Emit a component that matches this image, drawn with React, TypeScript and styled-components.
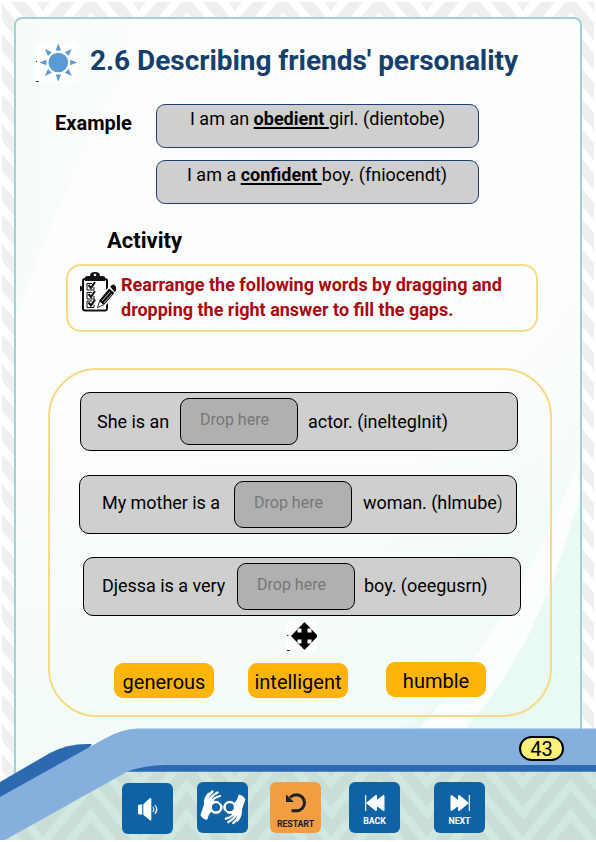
import React from "react";
import styled, { createGlobalStyle } from "styled-components";

const Global = createGlobalStyle`
  * { box-sizing: border-box; }
  html, body { margin: 0; padding: 0; background: #fff; }
  body { font-family: Roboto, "Liberation Sans", sans-serif; color: #000; overflow: hidden; }
`;

const Page = styled.main`
  position: relative;
  width: 596px;
  height: 842px;
  overflow: hidden;
  isolation: isolate;
`;

const Backdrop = styled.svg`
  position: absolute;
  inset: 0;
  z-index: -1;
`;

const SheetWrap = styled.div`
  padding-top: 16.5px;
  height: 728px;
`;

const Sheet = styled.section`
  width: 568px;
  height: 766px;
  margin-left: 14px;
  border: 2px solid #a3cfd6;
  border-radius: 8px;
  display: flex;
  flex-direction: column;
`;

const Header = styled.header`
  display: flex;
  height: 85.5px;
  padding: 24.5px 0 0 20px;
`;

const Title = styled.h1`
  margin: 1px 0 0 13px;
  font-size: 28px;
  line-height: 34px;
  letter-spacing: -0.04px;
  font-weight: 700;
  color: #143f6e;
  white-space: nowrap;
`;

const Examples = styled.section`
  display: grid;
  grid-template-columns: 101px 323px;
  row-gap: 12px;
  padding-left: 39px;
`;

const Label = styled.h2<{ $size?: number; $ml?: number; $top?: number }>`
  height: 24px;
  margin: ${(p) => p.$top ?? 0}px 0 0 ${(p) => p.$ml ?? 0}px;
  font-size: ${(p) => p.$size ?? 20}px;
  line-height: 24px;
  font-weight: 700;
`;

const ExampleBox = styled.div<{ $indent: number }>`
  grid-column: 2;
  height: 44px;
  padding: 2px 0 0 ${(p) => p.$indent}px;
  border: 1px solid #1d426e;
  border-radius: 9px;
  background: #cfcfcf;
  font-size: 18px;
  line-height: 24px;
  white-space: pre;
  b { text-decoration: underline; text-decoration-thickness: 2px; text-underline-offset: 2px; }
`;

const Instruction = styled.section`
  display: flex;
  width: 472px;
  height: 68px;
  margin: 11px 0 0 50px;
  padding: 6px 0 0 12px;
  border: 2px solid #f9da84;
  border-radius: 15px;
`;

const InstructionText = styled.p`
  margin: 0 0 0 5px;
  font-size: 18px;
  line-height: 25px;
  font-weight: 700;
  color: #a90710;
  white-space: nowrap;
`;

const Feedback = styled.p`
  height: 36px;
  margin: 0;
  padding: 5px 0 0 238px;
  font-size: 19px;
  font-weight: 500;
  line-height: 24px;
  color: #fff;
`;

const Exercise = styled.section`
  width: 504px;
  height: 349px;
  margin-left: 32px;
  border: 2px solid #f8da86;
  border-radius: 49px;
  padding-top: 22px;
`;

const Sentence = styled.div<{ $ml: number; $gap: number }>`
  display: flex;
  width: 438px;
  height: 59px;
  margin: 0 0 ${(p) => p.$gap}px ${(p) => p.$ml}px;
  border: 1px solid #000;
  border-radius: 10px;
  background: #cfcfcf;
  font-size: 18px;
  line-height: 24px;
  letter-spacing: -0.04px;
  white-space: pre;
`;

const Lead = styled.span<{ $width: number; $pad: number; $top: number }>`
  width: ${(p) => p.$width}px;
  padding: ${(p) => p.$top}px 0 0 ${(p) => p.$pad}px;
`;

const Drop = styled.span`
  width: 118px;
  height: 47px;
  margin-top: 5px;
  padding: 9px 0 0 19px;
  border: 1px solid #000;
  border-radius: 9px;
  background: #b0b0b0;
  color: #777;
  font-size: 16px;
  letter-spacing: 0;
`;

const Tail = styled.span<{ $pad: number; $top: number }>`
  padding: ${(p) => p.$top}px 0 0 ${(p) => p.$pad}px;
`;

const Thin = styled.span`
  font-weight: 300;
`;

const MoveIcon = styled.svg`
  display: block;
  margin: 0 0 11px 237px;
`;

const Words = styled.div`
  display: flex;
  padding-left: 64px;
`;

const Word = styled.button<{ $ml?: number; $up?: boolean }>`
  width: 100px;
  height: 35px;
  margin: ${(p) => (p.$up ? 0 : 1)}px 0 0 ${(p) => p.$ml ?? 0}px;
  padding: 3px 0 0;
  border: 0;
  border-radius: 9px;
  background: #feb409;
  font: 20px/24px Roboto, sans-serif;
  color: #000;
`;

const Footer = styled.footer`
  position: relative;
  height: 114px;
  isolation: isolate;
`;

const Wave = styled.svg`
  position: absolute;
  inset: 0;
  z-index: -1;
`;

const PageRow = styled.div`
  display: flex;
  justify-content: flex-end;
  height: 54px;
  padding: 8px 32px 0 0;
`;

const PageNumber = styled.span`
  width: 45px;
  height: 25px;
  border: 2px solid #000;
  border-radius: 13px;
  background: #fff27a;
  font-size: 20px;
  line-height: 22px;
  text-align: center;
`;

const Nav = styled.nav`
  display: flex;
  padding-left: 122px;
`;

const NavButton = styled.button<{ $ml?: number; $orange?: boolean; $down?: boolean }>`
  display: flex;
  flex-direction: column;
  align-items: center;
  justify-content: center;
  width: 51px;
  height: 51px;
  margin: ${(p) => (p.$down ? 1 : 0)}px 0 0 ${(p) => p.$ml ?? 0}px;
  padding: 0;
  border: 0;
  border-radius: 6px;
  background: ${(p) => (p.$orange ? "#f29d42" : "#0e63a6")};
  color: ${(p) => (p.$orange ? "#17222b" : "#fff")};
  svg { display: block; }
`;

const Caption = styled.span<{ $gap: number }>`
  margin: ${(p) => p.$gap}px 0 -5px;
  font: 700 8.8px/10px Roboto, sans-serif;
  letter-spacing: -0.1px;
`;

const PITCH = 30;

const Chevrons = ({ id, color, x, y }: { id: string; color: string; x: number; y: number }) => (
  <pattern id={id} width="96" height={PITCH} patternUnits="userSpaceOnUse" x={x} y={y}>
    {[-1, 0, 1, 2, 3, 4].map((n) => (
      <path
        key={n}
        d={`M-48 ${n * PITCH - 58}l48 58l48 -58l48 58l48 -58`}
        fill="none"
        stroke={color}
        strokeWidth="11"
      />
    ))}
  </pattern>
);

const PageBackdrop = () => (
  <Backdrop width="596" height="842" viewBox="0 0 596 842">
    <defs>
      <Chevrons id="grey" color="#efefef" x={43} y={2} />
      <linearGradient id="tint" x1="0.2" y1="0" x2="1" y2="1">
        <stop offset="0" stopColor="#fdfdfe" />
        <stop offset="0.6" stopColor="#fcfdfd" />
        <stop offset="1" stopColor="#e8faf3" />
      </linearGradient>
      <linearGradient id="left" x1="0" x2="1">
        <stop offset="0" stopColor="#f5fcfa" />
        <stop offset="1" stopColor="#fdfdfe" />
      </linearGradient>
      <linearGradient id="low" x1="0" y1="0" x2="0" y2="1">
        <stop offset="0" stopColor="#f1fbf7" stopOpacity="0" />
        <stop offset="1" stopColor="#f1fbf7" />
      </linearGradient>
    </defs>
    <rect x="2" y="2" width="592" height="838" fill="url(#grey)" />
    <rect x="15" y="17.500" width="566" height="763" rx="8" fill="url(#tint)" />
    <path d="M16 22H160Q72 150 16 320Z" fill="url(#left)" />
    <rect x="16" y="440" width="564" height="340" fill="url(#low)" />
    <path d="M581 500Q500 680 400 728H581Z" fill="#e5faf2" opacity=".6" />
    <path d="M575 470Q520 610 420 728H466Q545 640 581 485Z" fill="#fff" opacity=".75" />
  </Backdrop>
);

const Sun = () => (
  <svg width="41" height="40" viewBox="0 0 41 40">
    <rect width="41" height="40" fill="#fff" />
    <circle cx="22.3" cy="19.5" r="9.800" fill="#5b9bd5" />
    {[0, 45, 90, 135, 180, 225, 270, 315].map((a) => (
      <path key={a} d="M22.300 .5l2.700 7.100h-5.400z" fill="#5b9bd5" transform={`rotate(${a} 22.3 19.5)`} />
    ))}
    <path d="M0 38.500h2.500M0 18.500h1" stroke="#222" strokeWidth="1" />
  </svg>
);

const Clipboard = () => (
  <svg width="36" height="42" viewBox="0 0 36 42">
    <rect x="3" y="7" width="24" height="31.500" rx="2" fill="#fff" stroke="#111" strokeWidth="2" />
    <path d="M5 9V5.500Q5 4 8 4h2Q10 0 15 0t5 4h2q3 0 3 1.500V9z" fill="#111" />
    <circle cx="15" cy="3" r="1.300" fill="#fff" />
    <path d="M0 13.500l3 2v2l-3 2z" fill="#111" />
    {[11.5, 20.5, 29].map((y) => (
      <g key={y} fill="none" stroke="#111">
        <path d={`M12 ${y}H7v6.500h7v-3`} strokeWidth="1" />
        <path d={`M8.500 ${y + 1.5}l2.500 3 4-6`} strokeWidth="2" />
      </g>
    ))}
    <path d="M16.500 36.500l2.500-9L29 15.500l6.500 5.500-10.500 12z" fill="#111" stroke="#fff" strokeWidth="1.500" />
    <path d="M17.500 35.500l2.200-6.500 4 3.800z" fill="#fff" stroke="#111" strokeWidth=".8" />
    <path d="M22 29l8-9M24 31l8-9" stroke="#fff" strokeWidth=".7" />
    <path d="M30 14.500l2-1.500q1.500-1 3 .5t1 3v2.500l-1.500 1z" fill="#111" />
  </svg>
);

const MoveArrows = () => (
  <MoveIcon width="30" height="30" viewBox="0 0 30 30">
    <rect width="30" height="30" fill="#fff" />
    <path d="M17.500 1l13.500 14-13.500 14L4 15z" fill="#000" />
    <path d="M10.500 7.500h4v4h-4zM20.500 7.500h4v4h-4zM10.500 18.500h4v4h-4zM20.500 18.500h4v4h-4z" fill="#fff" />
    <path d="M0 29.500h3M0 14.500h1.500" stroke="#222" />
  </MoveIcon>
);

const Speaker = () => (
  <svg width="24" height="24" viewBox="0 0 24 24">
    <path d="M2 9q0-1.500 1.500-1.500H6.200v10H3.500Q2 17.500 2 16zM7.300 7.200L13.500 1.500q1.800-1.300 1.800.5v20.500q0 1.800-1.800.5L7.300 17.800z" fill="#fff" />
    <path d="M16.800 10q2.200 2.500 0 5M18.800 8q4 4.500 0 9" fill="none" stroke="#fff" strokeWidth="1.100" />
  </svg>
);

const Hand = () => (
  <g>
    <path d="M3.500 33L7.500 21 12 16.500l5.500 2L14 24l1 5-3 3.500L10 38q-5-1-6.500-5z" fill="#fff" />
    <path
      d="M9.500 21Q10 14 15.500 9.500M11.500 20Q14 14 20.500 10.500M13.500 20Q17 15.500 23 14M8 22Q7.500 17 11.500 12"
      fill="none"
      stroke="#fff"
      strokeWidth="2.300"
      strokeLinecap="round"
    />
    <circle cx="19" cy="25.300" r="5.300" fill="#0e63a6" stroke="#fff" strokeWidth="2.600" />
    <path d="M24.500 22l-3-2.800" stroke="#0e63a6" strokeWidth="1" />
  </g>
);

const SigningHands = () => (
  <svg width="51" height="51" viewBox="0 0 51 51">
    <Hand />
    <g transform="rotate(180 25.9 25.3)">
      <Hand />
    </g>
  </svg>
);

const RestartArrow = () => (
  <svg width="22" height="22" viewBox="0 0 22 22">
    <path d="M5 5.500Q8 2.800 11.500 2.800a8 8 0 1 1 0 16H6.500" fill="none" stroke="#17222b" strokeWidth="3" />
    <path d="M1 2.500v7.500h8z" fill="#17222b" />
  </svg>
);

const Skip = ({ back }: { back?: boolean }) => (
  <svg width="20" height="18" viewBox="0 0 20 18">
    <g transform={back ? "translate(20 0) scale(-1 1)" : undefined} fill="#fff" stroke="#fff" strokeLinejoin="round">
      <path d="M1.500 2v14l9-7zM9 2v14l8.500-7z" strokeWidth="2" />
      <path d="M19.300 1v16" strokeWidth="1.100" />
    </g>
  </svg>
);

const FooterWave = () => (
  <Wave width="596" height="114" viewBox="0 0 596 114">
    <defs>
      <Chevrons id="green" color="#c9ded7" x={43} y={10} />
    </defs>
    <path d="M0 112L120 43H596V112Z" fill="#d1e8e0" />
    <path d="M0 112L120 43H596V112Z" fill="url(#green)" />
    <path d="M127 43.700V30H596V43.700Z" fill="#2c69b0" />
    <path d="M0 54L50 25Q68 15 92 16L60 60L0 75Z" fill="#2c69b0" />
    <path d="M0 69L104 11Q122 .5 138 .5H596V37H165Q145 37 127 43.700L5 112H0Z" fill="#85afdd" />
  </Wave>
);

export default function App() {
  return (
    <Page>
      <Global />
      <PageBackdrop />
      <SheetWrap>
        <Sheet>
          <Header>
            <Sun />
            <Title>2.6 Describing friends' personality</Title>
          </Header>
          <Examples>
            <Label $top={7}>Example</Label>
            <ExampleBox $indent={33}>I am an <b>obedient </b>girl. (dientobe)</ExampleBox>
            <ExampleBox $indent={30}>I am a <b>confident </b>boy. (fniocendt)</ExampleBox>
          </Examples>
          <Label $size={22} $top={25} $ml={91}>Activity</Label>
          <Instruction>
            <Clipboard />
            <InstructionText>
              Rearrange the following words by dragging and
              <br />
              dropping the right answer to fill the gaps.
            </InstructionText>
          </Instruction>
          <Feedback>Correct</Feedback>
          <Exercise>
            <Sentence $ml={30} $gap={24}>
              <Lead $width={99} $pad={16} $top={17}>She is an</Lead>
              <Drop>Drop here</Drop>
              <Tail $pad={10} $top={17}>actor. (ineltegInit)</Tail>
            </Sentence>
            <Sentence $ml={29} $gap={23}>
              <Lead $width={154} $pad={22} $top={15}>My mother is a</Lead>
              <Drop>Drop here</Drop>
              <Tail $pad={11} $top={15}>woman. (hlmube<Thin>)</Thin></Tail>
            </Sentence>
            <Sentence $ml={33} $gap={5}>
              <Lead $width={153} $pad={18} $top={16}>Djessa is a very</Lead>
              <Drop>Drop here</Drop>
              <Tail $pad={9} $top={16}>boy. (oeegusrn)</Tail>
            </Sentence>
            <MoveArrows />
            <Words>
              <Word>generous</Word>
              <Word $ml={34}>intelligent</Word>
              <Word $ml={38} $up>humble</Word>
            </Words>
          </Exercise>
        </Sheet>
      </SheetWrap>
      <Footer>
        <FooterWave />
        <PageRow>
          <PageNumber>43</PageNumber>
        </PageRow>
        <Nav>
          <NavButton $down aria-label="Listen"><Speaker /></NavButton>
          <NavButton $ml={24} aria-label="Sign language"><SigningHands /></NavButton>
          <NavButton $ml={22} $orange><RestartArrow /><Caption $gap={5}>RESTART</Caption></NavButton>
          <NavButton $ml={28}><Skip back /><Caption $gap={4}>BACK</Caption></NavButton>
          <NavButton $ml={34}><Skip /><Caption $gap={4}>NEXT</Caption></NavButton>
        </Nav>
      </Footer>
    </Page>
  );
}
